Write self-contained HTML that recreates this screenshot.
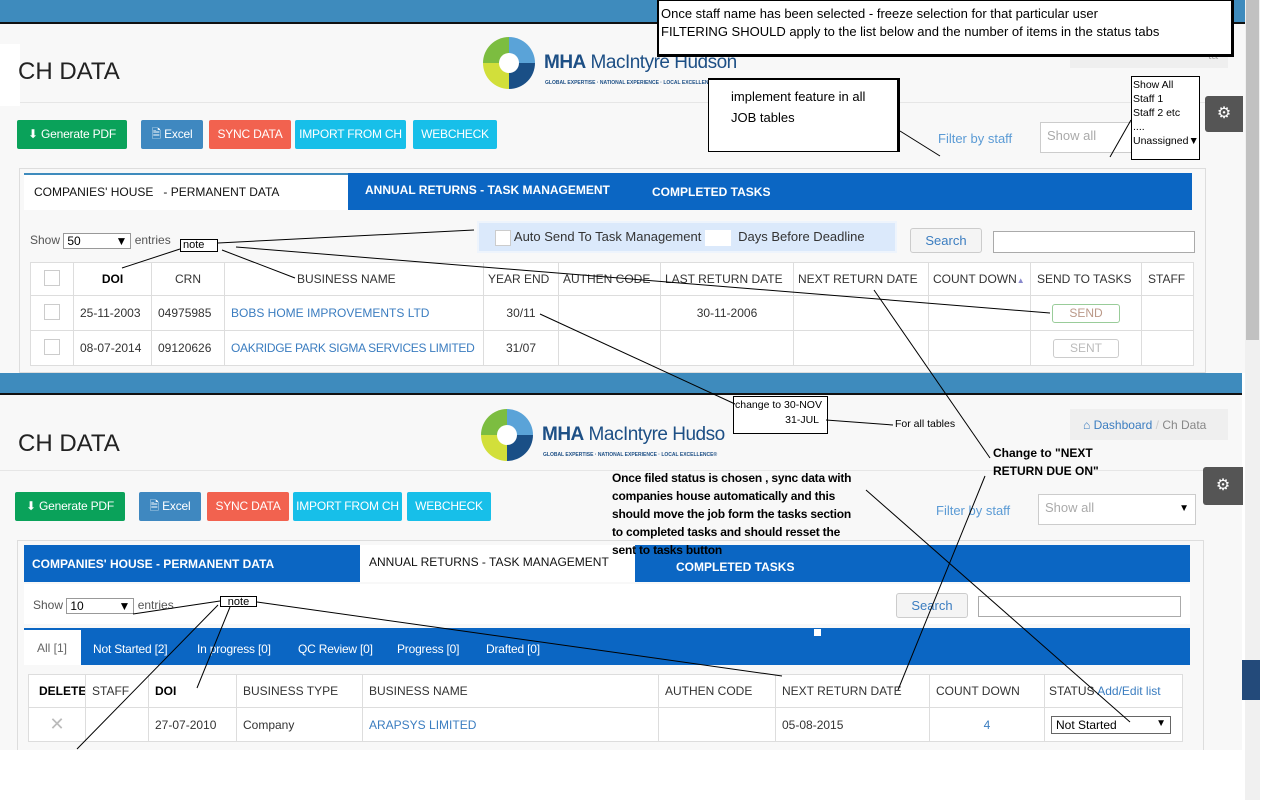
<!DOCTYPE html>
<html><head><meta charset="utf-8"><style>
*{box-sizing:border-box;margin:0;padding:0}
body{width:1280px;height:800px;overflow:hidden;background:#fff;font-family:"Liberation Sans",sans-serif;font-size:12px;color:#333;position:relative}
.a{position:absolute}
.bar{background:#3e8bbd;border-bottom:2px solid #111}
.btn{position:absolute;color:#fff;font-size:12px;text-align:center;line-height:29px;border-radius:2px;white-space:nowrap;letter-spacing:-0.2px}
.tbl{position:absolute;border-collapse:collapse;background:#fff;table-layout:fixed}
.tbl td,.tbl th{border:1px solid #ddd;font-size:12px;padding:0 6px;white-space:nowrap;overflow:hidden}
.tbl th{font-weight:normal;color:#333;text-align:left}
.lnk{color:#3b7dc0}
.cb{display:inline-block;width:16px;height:16px;border:1px solid #ccc;background:#fff}
.gear{position:absolute;background:#555;color:#fff;font-size:16px;text-align:center;border-radius:3px 0 0 3px}
.note{position:absolute;border:1px solid #000;background:#fff;font-size:11px;color:#000;line-height:11px;padding:0 2px}
.st{position:absolute;top:642px;color:#fff;letter-spacing:-0.2px}
</style></head><body>
<div class="a" style="left:0;top:0;width:1245px;height:373px;background:#f8f8f8"></div>
<div class="a bar" style="left:0;top:0;width:1245px;height:24px"></div>
<div class="a" style="left:0;top:102px;width:1242px;height:1px;background:#e6e6e6"></div>
<div class="a" style="left:0;top:44px;width:20px;height:62px;background:#fff"></div>
<div class="a" style="left:18px;top:58px;font-size:24px;color:#222">CH DATA</div>
<div class="a" style="left:483px;top:37px;width:52px;height:52px;border-radius:50%;background:conic-gradient(#5aa3d8 0 25%,#1a4f86 0 50%,#d2df3a 0 75%,#7cbd40 0)"></div>
<div class="a" style="left:499px;top:53px;width:20px;height:20px;border-radius:50%;background:#fff"></div>
<div class="a" style="left:544px;top:52px;font-size:19px;color:#1d4f85;letter-spacing:-0.5px"><b>MHA</b> MacIntyre Hudson</div>
<div class="a" style="left:545px;top:80px;font-size:5px;color:#1d4f85;font-weight:bold">GLOBAL EXPERTISE · NATIONAL EXPERIENCE · LOCAL EXCELLENCE</div>
<div class="a" style="left:1070px;top:37px;width:158px;height:31px;background:#efefef;color:#aaa;text-align:right;padding:11px 10px 0 0">ta</div>
<div class="btn" style="left:17px;top:120px;width:110px;background:#0aa25a">⬇ Generate PDF</div>
<div class="btn" style="left:141px;top:120px;width:62px;background:#3f88c0">🗎 Excel</div>
<div class="btn" style="left:209px;top:120px;width:82px;background:#f2624f">SYNC DATA</div>
<div class="btn" style="left:295px;top:120px;width:111px;background:#17bfe9">IMPORT FROM CH</div>
<div class="btn" style="left:413px;top:120px;width:84px;background:#17bfe9">WEBCHECK</div>
<div class="a" style="left:938px;top:131px;font-size:13px;color:#5b9bd5">Filter by staff</div>
<div class="a" style="left:1040px;top:122px;width:150px;height:31px;border:1px solid #ccc;background:#fff;color:#aaa;font-size:13px;padding:5px 6px">Show all</div>
<div class="gear" style="left:1205px;top:96px;width:38px;height:36px;line-height:36px">⚙</div>
<div class="a" style="left:19px;top:168px;width:1187px;height:205px;border:1px solid #ddd;background:#f8f8f8"></div>
<div class="a" style="left:24px;top:173px;width:1168px;height:37px;background:#0b66c3"></div>
<div class="a" style="left:24px;top:173px;width:324px;height:37px;background:#fff;border-top:2px solid #3e8bbd;color:#111;font-size:12px;padding:10px 10px">COMPANIES' HOUSE &nbsp; - PERMANENT DATA</div>
<div class="a" style="left:365px;top:183px;color:#fff;font-weight:bold;font-size:12px">ANNUAL RETURNS - TASK MANAGEMENT</div>
<div class="a" style="left:652px;top:185px;color:#fff;font-weight:bold;font-size:12px">COMPLETED TASKS</div>
<div class="a" style="left:30px;top:233px;color:#555">Show <span style="display:inline-block;width:68px;height:16px;border:1px solid #999;background:#fff;color:#000;padding:0 3px;vertical-align:middle">50 <span style="float:right">▼</span></span> entries</div>
<div class="a" style="left:477px;top:221px;width:420px;height:32px;background:#dbe9fb;border:2px solid #eef4fc;font-size:13px;color:#333;padding:6px 0 0 16px"><span class="cb" style="vertical-align:middle"></span> Auto Send To Task Management <span style="display:inline-block;width:26px;height:16px;background:#fff;vertical-align:middle"></span> &nbsp;Days Before Deadline</div>
<div class="a" style="left:910px;top:228px;width:72px;height:25px;border:1px solid #ccc;border-radius:3px;background:#f4f4f4;color:#3b7dc0;font-size:13px;text-align:center;line-height:23px">Search</div>
<div class="a" style="left:993px;top:231px;width:202px;height:22px;border:1px solid #aaa;background:#fff"></div>
<table class="tbl" style="left:30px;top:262px;width:1163px">
<colgroup><col style="width:43px"><col style="width:78px"><col style="width:73px"><col style="width:259px"><col style="width:75px"><col style="width:102px"><col style="width:133px"><col style="width:135px"><col style="width:102px"><col style="width:111px"><col style="width:52px"></colgroup>
<tr style="height:33px"><th style="text-align:center"><span class="cb"></span></th><th style="color:#000;font-weight:bold;text-align:center">DOI</th><th style="text-align:center">CRN</th><th style="padding-left:72px">BUSINESS NAME</th><th style="padding:0 4px">YEAR END</th><th style="padding:0 4px">AUTHEN CODE</th><th style="padding:0 4px">LAST RETURN DATE</th><th style="padding:0 4px">NEXT RETURN DATE</th><th style="padding:0 4px">COUNT DOWN<span style="color:#88c;font-size:8px">▲</span></th><th>SEND TO TASKS</th><th>STAFF</th></tr>
<tr style="height:35px"><td style="text-align:center"><span class="cb"></span></td><td>25-11-2003</td><td>04975985</td><td class="lnk">BOBS HOME IMPROVEMENTS LTD</td><td style="text-align:center">30/11</td><td></td><td style="text-align:center">30-11-2006</td><td></td><td></td><td style="text-align:center"><span style="display:inline-block;width:68px;height:19px;border:1px solid #9c9;border-radius:3px;color:#b98;line-height:17px">SEND</span></td><td></td></tr>
<tr style="height:35px"><td style="text-align:center"><span class="cb"></span></td><td>08-07-2014</td><td>09120626</td><td class="lnk" style="letter-spacing:-0.3px">OAKRIDGE PARK SIGMA SERVICES LIMITED</td><td style="text-align:center">31/07</td><td></td><td></td><td></td><td></td><td style="text-align:center"><span style="display:inline-block;width:66px;height:19px;border:1px solid #ccc;border-radius:3px;color:#bbb;line-height:17px">SENT</span></td><td></td></tr>
</table>
<div class="a" style="left:1245px;top:0;width:15px;height:800px;background:#f0f0f0"></div>
<div class="a" style="left:1246px;top:0;width:13px;height:340px;background:#c1c1c1"></div>
<div class="a" style="left:1242px;top:660px;width:18px;height:40px;background:#234a7a"></div>

<div class="a" style="left:0;top:373px;width:1242px;height:380px;background:#f8f8f8"></div>
<div class="a bar" style="left:0;top:373px;width:1242px;height:22px"></div>
<div class="a" style="left:0;top:470px;width:1242px;height:1px;background:#e6e6e6"></div>
<div class="a" style="left:18px;top:430px;font-size:24px;color:#222">CH DATA</div>
<div class="a" style="left:481px;top:409px;width:52px;height:52px;border-radius:50%;background:conic-gradient(#5aa3d8 0 25%,#1a4f86 0 50%,#d2df3a 0 75%,#7cbd40 0)"></div>
<div class="a" style="left:497px;top:425px;width:20px;height:20px;border-radius:50%;background:#fff"></div>
<div class="a" style="left:542px;top:424px;font-size:19px;color:#1d4f85;letter-spacing:-0.5px"><b>MHA</b> MacIntyre Hudso</div>
<div class="a" style="left:543px;top:452px;font-size:5px;color:#1d4f85;font-weight:bold">GLOBAL EXPERTISE · NATIONAL EXPERIENCE · LOCAL EXCELLENCE®</div>
<div class="a" style="left:1070px;top:409px;width:158px;height:31px;background:#efefef;font-size:12px;padding:9px 0 0 13px"><span class="lnk">⌂ Dashboard</span> <span style="color:#ccc">/</span> <span style="color:#888">Ch Data</span></div>
<div class="gear" style="left:1203px;top:467px;width:40px;height:38px;line-height:38px">⚙</div>
<div class="btn" style="left:15px;top:492px;width:110px;background:#0aa25a">⬇ Generate PDF</div>
<div class="btn" style="left:139px;top:492px;width:62px;background:#3f88c0">🗎 Excel</div>
<div class="btn" style="left:207px;top:492px;width:82px;background:#f2624f">SYNC DATA</div>
<div class="btn" style="left:293px;top:492px;width:109px;background:#17bfe9">IMPORT FROM CH</div>
<div class="btn" style="left:407px;top:492px;width:84px;background:#17bfe9">WEBCHECK</div>
<div class="a" style="left:936px;top:503px;font-size:13px;color:#5b9bd5">Filter by staff</div>
<div class="a" style="left:1038px;top:494px;width:158px;height:31px;border:1px solid #ccc;background:#fff;color:#aaa;font-size:13px;padding:5px 6px">Show all<span style="float:right;color:#000;font-size:10px;margin-top:3px">▼</span></div>
<div class="a" style="left:17px;top:540px;width:1187px;height:215px;border:1px solid #ddd;background:#f8f8f8"></div>
<div class="a" style="left:24px;top:545px;width:1166px;height:37px;background:#0b66c3"></div>
<div class="a" style="left:32px;top:557px;color:#fff;font-weight:bold">COMPANIES' HOUSE - PERMANENT DATA</div>
<div class="a" style="left:360px;top:545px;width:275px;height:37px;background:#fff;color:#111;padding:10px 9px">ANNUAL RETURNS - TASK MANAGEMENT</div>
<div class="a" style="left:676px;top:560px;color:#fff;font-weight:bold">COMPLETED TASKS</div>
<div class="a" style="left:24px;top:584px;width:1166px;height:40px;background:#fff"></div>
<div class="a" style="left:33px;top:598px;color:#555">Show <span style="display:inline-block;width:68px;height:16px;border:1px solid #999;background:#fff;color:#000;padding:0 3px;vertical-align:middle">10 <span style="float:right">▼</span></span> entries</div>
<div class="a" style="left:896px;top:593px;width:72px;height:25px;border:1px solid #ccc;border-radius:3px;background:#f4f4f4;color:#3b7dc0;font-size:13px;text-align:center;line-height:23px">Search</div>
<div class="a" style="left:978px;top:596px;width:203px;height:21px;border:1px solid #aaa;background:#fff"></div>
<div class="a" style="left:24px;top:628px;width:1166px;height:37px;background:#0b66c3"></div>
<div class="a" style="left:24px;top:630px;width:57px;height:35px;background:#fff;color:#666;padding:11px 0 0 13px">All [1]</div>
<span class="st" style="left:93px">Not Started [2]</span>
<span class="st" style="left:197px">In progress [0]</span>
<span class="st" style="left:298px">QC Review [0]</span>
<span class="st" style="left:397px">Progress [0]</span>
<span class="st" style="left:486px">Drafted [0]</span>
<div class="a" style="left:814px;top:629px;width:7px;height:7px;background:#fff"></div>
<table class="tbl" style="left:28px;top:674px;width:1154px">
<colgroup><col style="width:57px"><col style="width:63px"><col style="width:88px"><col style="width:126px"><col style="width:296px"><col style="width:117px"><col style="width:154px"><col style="width:115px"><col style="width:138px"></colgroup>
<tr style="height:33px"><th style="font-weight:bold;color:#000;padding:0 0 0 10px">DELETE</th><th>STAFF</th><th style="font-weight:bold;color:#000">DOI</th><th>BUSINESS TYPE</th><th>BUSINESS NAME</th><th>AUTHEN CODE</th><th>NEXT RETURN DATE</th><th>COUNT DOWN <span style="color:#88c;font-size:8px;margin-left:22px">▲</span></th><th style="padding:0 4px">STATUS <span class="lnk">Add/Edit list</span></th></tr>
<tr style="height:34px"><td style="text-align:center;color:#bbb;font-size:18px">✕</td><td></td><td>27-07-2010</td><td>Company</td><td class="lnk">ARAPSYS LIMITED</td><td></td><td>05-08-2015</td><td style="text-align:center;color:#3b7dc0">4</td><td><span style="display:inline-block;width:120px;height:18px;border:1px solid #666;color:#000;padding:1px 4px">Not Started<span style="float:right;font-size:10px">▼</span></span></td></tr>
</table>
<div class="a" style="left:0;top:750px;width:1245px;height:50px;background:#fff"></div>

<div class="a" style="left:657px;top:0;width:577px;height:57px;border:2px solid #000;border-width:1px 3px 3px 2px;background:#fff;font-size:13px;color:#000;padding:4px 2px;line-height:18px">Once staff name has been selected - freeze selection for that particular user<br>FILTERING SHOULD apply to the list below and the number of items in the status tabs</div>
<div class="a" style="left:708px;top:78px;width:192px;height:74px;border:2px solid #000;border-width:2px 3px 1px 1px;background:#fff;font-size:13px;color:#000;padding:6px 0 0 22px;line-height:21px">implement feature in all<br>JOB tables</div>
<div class="a" style="left:1131px;top:76px;width:69px;height:84px;border:1px solid #000;background:#fff;font-size:10.5px;color:#000;line-height:14px;padding:1px 1px">Show All<br>Staff 1<br>Staff 2 etc<br>....<br>Unassigned▼</div>
<div class="note" style="left:180px;top:239px;width:38px;height:13px">note</div>
<div class="note" style="left:220px;top:596px;width:37px;height:11px;text-align:center">note</div>
<div class="a" style="left:733px;top:396px;width:95px;height:38px;border:1px solid #000;background:#fff;font-size:10.5px;color:#000;line-height:15px;padding:1px 0 0 1px;white-space:nowrap">change to 30-NOV<div style="text-align:right;padding-right:8px">31-JUL</div></div>
<div class="a" style="left:895px;top:418px;font-size:10.5px;color:#000">For all tables</div>
<div class="a" style="left:993px;top:444px;font-size:12px;font-weight:bold;color:#000;line-height:18px">Change to "NEXT<br>RETURN DUE ON"</div>
<div class="a" style="left:612px;top:469px;font-size:12px;font-weight:bold;color:#000;line-height:18px;white-space:nowrap;letter-spacing:-0.2px">Once filed status is chosen , sync data with<br>companies house automatically and this<br>should move the job form the tasks section<br>to completed tasks and should resset the<br>sent to tasks button</div>

<svg class="a" style="left:0;top:0" width="1280" height="800" stroke="#000" stroke-width="1" fill="none">
<line x1="218" y1="243" x2="474" y2="230"/>
<line x1="236" y1="247" x2="1050" y2="313"/>
<line x1="180" y1="249" x2="122" y2="268"/>
<line x1="222" y1="250" x2="295" y2="278"/>
<line x1="540" y1="314" x2="735" y2="404"/>
<line x1="874" y1="290" x2="990" y2="458"/>
<line x1="985" y1="476" x2="898" y2="690"/>
<line x1="826" y1="420" x2="893" y2="425"/>
<line x1="900" y1="131" x2="940" y2="156"/>
<line x1="1131" y1="120" x2="1110" y2="157"/>
<line x1="220" y1="601" x2="133" y2="614"/>
<line x1="218" y1="605" x2="77" y2="749"/>
<line x1="230" y1="607" x2="197" y2="688"/>
<line x1="257" y1="602" x2="782" y2="676"/>
<line x1="866" y1="490" x2="1130" y2="722"/>
</svg>
</body></html>
